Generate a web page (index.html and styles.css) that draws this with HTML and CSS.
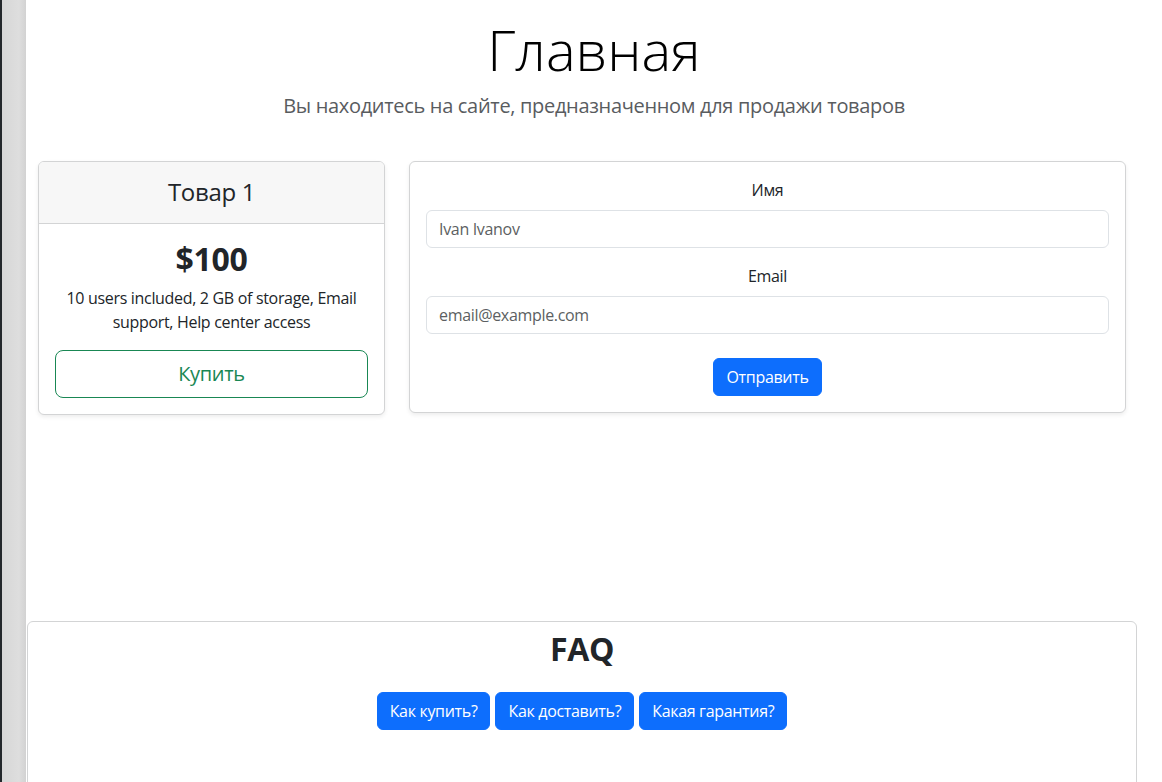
FILE: index.html
```html
<!DOCTYPE html>
<html lang="ru">
<head>
<meta charset="utf-8">
<title>Главная</title>
<link rel="stylesheet" href="styles.css">
</head>
<body>
<div class="frame">
  <div class="side-strip"></div>
  <main class="page">
    <header class="hero">
      <h1 class="hero-title">Главная</h1>
      <p class="hero-lead">Вы находитесь на сайте, предназначенном для продажи товаров</p>
    </header>

    <section class="cards-row">
      <div class="card product-card">
        <div class="card-header">
          <h4 class="product-name">Товар 1</h4>
        </div>
        <div class="card-body product-body">
          <h2 class="price">$100</h2>
          <p class="features">10 users included, 2 GB of storage, Email support, Help center access</p>
          <button class="btn-outline-success">Купить</button>
        </div>
      </div>

      <form class="card form-card">
        <div class="card-body form-body">
          <div class="field">
            <label class="field-label" for="name">Имя</label>
            <input class="field-input" id="name" type="text" placeholder="Ivan Ivanov">
          </div>
          <div class="field">
            <label class="field-label" for="email">Email</label>
            <input class="field-input" id="email" type="email" placeholder="email@example.com">
          </div>
          <div class="submit-row">
            <button type="button" class="btn-primary">Отправить</button>
          </div>
        </div>
      </form>
    </section>

    <section class="faq-card">
      <h2 class="faq-title">FAQ</h2>
      <div class="faq-buttons">
        <button class="btn-primary">Как купить?</button>
        <button class="btn-primary">Как доставить?</button>
        <button class="btn-primary">Какая гарантия?</button>
      </div>
    </section>
  </main>
</div>
</body>
</html>
```

FILE: styles.css
```css
* { box-sizing: border-box; }

html, body {
  margin: 0;
  padding: 0;
  background: #fff;
}

body {
  font-family: "Open Sans", "Noto Sans", sans-serif;
  font-size: 16px;
  line-height: 1.5;
  letter-spacing: -0.02em;
  color: #212529;
  overflow: hidden;
}

button, input {
  letter-spacing: inherit;
}

.frame {
  display: flex;
  min-height: 782px;
}

.side-strip {
  flex: 0 0 26px;
  border-left: 2px solid #23272b;
  background: linear-gradient(to right, #d6d6d6, #dedede 70%, #d2d2d2);
}

.page {
  flex: 1 1 auto;
  min-width: 0;
}

.hero {
  text-align: center;
  padding-top: 16px;
}

.hero-title {
  margin: 0;
  font-size: 56px;
  font-weight: 300;
  line-height: 1.2;
  letter-spacing: 0;
  color: #000;
}

.hero-lead {
  margin: 8px 0 0;
  font-size: 20px;
  line-height: 1.5;
  color: #595c5f;
}

.cards-row {
  display: grid;
  grid-template-columns: 347px 717px;
  gap: 24px;
  align-items: start;
  padding: 0 36px 0 12px;
  margin-top: 40px;
}

.card {
  background: #fff;
  border: 1px solid #d3d4d5;
  border-radius: 6px;
  box-shadow: 0 2px 4px rgba(0, 0, 0, 0.075);
}

.card-header {
  background: #f7f7f7;
  border-bottom: 1px solid #d3d4d5;
  border-radius: 5px 5px 0 0;
  padding: 16px;
  text-align: center;
}

.product-name {
  margin: 0;
  font-size: 24px;
  font-weight: 400;
  line-height: 1.2;
}

.card-body {
  padding: 16px;
}

.product-body {
  text-align: center;
}

.price {
  margin: 0 0 8px;
  font-size: 32px;
  font-weight: 700;
  line-height: 1.2;
  letter-spacing: -0.01em;
}

.features {
  margin: 0 0 16px;
  font-size: 16px;
  line-height: 24px;
}

.btn-outline-success {
  display: block;
  width: 100%;
  font-family: inherit;
  font-size: 20px;
  line-height: 30px;
  padding: 8px 16px;
  color: #198754;
  background: transparent;
  border: 1px solid #198754;
  border-radius: 8px;
}

.form-body {
  text-align: center;
}

.field {
  margin-bottom: 16px;
}

.field-label {
  display: block;
  margin-bottom: 8px;
  font-size: 16px;
  line-height: 24px;
}

.field-input {
  display: block;
  width: 100%;
  height: 38px;
  padding: 6px 12px;
  font-family: inherit;
  font-size: 16px;
  line-height: 24px;
  color: #212529;
  background: #fff;
  border: 1px solid #dee2e6;
  border-radius: 6px;
}

.field-input::placeholder {
  color: #5c5f62;
  opacity: 1;
}

.submit-row {
  padding-top: 8px;
}

.btn-primary {
  display: inline-block;
  font-family: inherit;
  font-size: 16px;
  line-height: 24px;
  padding: 6px 12px;
  color: #fff;
  background: #0d6efd;
  border: 1px solid #0d6efd;
  border-radius: 6px;
}

.faq-card {
  margin: 206px 25px 0 1px;
  height: 200px;
  border: 1px solid #d3d4d5;
  border-radius: 6px;
  text-align: center;
  padding-top: 8px;
}

.faq-title {
  margin: 0;
  font-size: 32px;
  font-weight: 700;
  line-height: 1.2;
}

.faq-buttons {
  display: flex;
  justify-content: center;
  gap: 5px;
  margin-top: 23px;
}
```
